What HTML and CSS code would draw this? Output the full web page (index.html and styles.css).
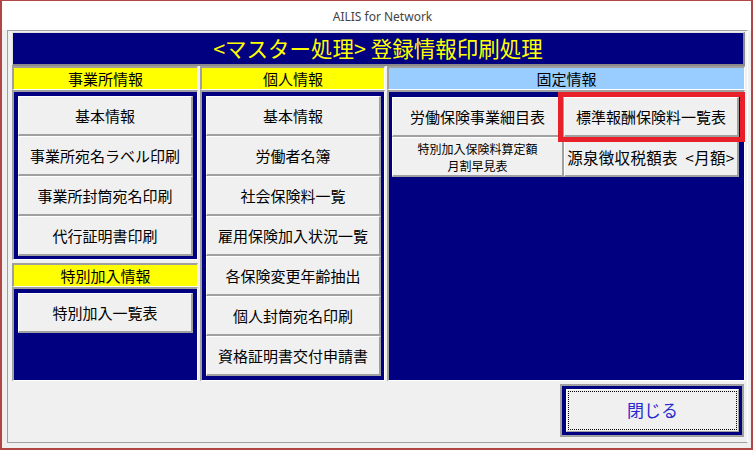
FILE: index.html
```html
<!DOCTYPE html>
<html lang="ja">
<head>
<meta charset="UTF-8">
<meta name="viewport" content="width=device-width, initial-scale=1.0">
<title>AILIS for Network</title>
<link rel="stylesheet" href="styles.css">
</head>
<body>

<div class="window">
  <div class="titlebar">AILIS for Network</div>
  <div class="client">
    <div class="panel">
      <div class="banner">&lt;マスター処理&gt; 登録情報印刷処理</div>

      <div class="columns">
        <div class="col">
          <div class="sec-head yellow">事業所情報</div>
          <div class="navy">
            <button class="btn">基本情報</button>
            <button class="btn">事業所宛名ラベル印刷</button>
            <button class="btn">事業所封筒宛名印刷</button>
            <button class="btn">代行証明書印刷</button>
          </div>
          <div class="sec-head yellow gap-top">特別加入情報</div>
          <div class="navy grow">
            <button class="btn">特別加入一覧表</button>
          </div>
        </div>

        <div class="col">
          <div class="sec-head yellow">個人情報</div>
          <div class="navy grow">
            <button class="btn">基本情報</button>
            <button class="btn">労働者名簿</button>
            <button class="btn">社会保険料一覧</button>
            <button class="btn">雇用保険加入状況一覧</button>
            <button class="btn">各保険変更年齢抽出</button>
            <button class="btn">個人封筒宛名印刷</button>
            <button class="btn">資格証明書交付申請書</button>
          </div>
        </div>

        <div class="col">
          <div class="sec-head blue">固定情報</div>
          <div class="navy grow fixed">
            <div class="fixed-grid">
              <button class="btn">労働保険事業細目表</button>
              <button class="btn">標準報酬保険料一覧表</button>
              <button class="btn small">特別加入保険料算定額<br>月割早見表</button>
              <button class="btn wide-text">源泉徴収税額表&nbsp; &lt;月額&gt;</button>
              <div class="highlight"></div>
            </div>
          </div>
        </div>
      </div>

      <div class="footer">
        <div class="close-frame">
          <button class="close-btn"><span class="focus">閉じる</span></button>
        </div>
      </div>
    </div>
  </div>
</div>

</body>
</html>
```

FILE: styles.css
```css
* {
  box-sizing: border-box;
}
body {
  margin: 0;
  width: 755px;
  height: 450px;
  background-color: #fff;
  font-family: "Noto Sans CJK JP", "Noto Sans", sans-serif;
  overflow: hidden;
}
.window {
  width: 753px;
  height: 450px;
  border: 2px solid #b04646;
  border-top-width: 1px;
  display: flex;
  flex-direction: column;
  background-color: #f0f0f0;
}
.titlebar {
  height: 29px;
  background-color: #fff;
  color: #444;
  font-family: "Noto Sans", sans-serif;
  font-size: 12px;
  line-height: 31px;
  text-align: center;
  padding-left: 12px;
}
.client {
  flex: 1;
  padding: 0 3px 5px 5px;
}
.panel {
  height: 100%;
  border: 1px solid #a0a0a0;
  border-right-color: #fff;
  border-bottom-color: #a0a0a0;
  padding: 1px 2px 0 4px;
  display: flex;
  flex-direction: column;
}
.banner {
  height: 34px;
  background-color: #000080;
  border-top: 1px solid #e0e0e0;
  border-left: 1px solid #e0e0e0;
  border-right: 2px solid #8a8a8a;
  border-bottom: 2px solid #8a8a8a;
  color: #ffff00;
  font-size: 21.5px;
  line-height: 30px;
  text-align: center;
}
.columns {
  display: grid;
  grid-template-columns: 186px 185px 1fr;
  gap: 2px;
  height: 315px;
}
.col {
  display: flex;
  flex-direction: column;
}
.sec-head {
  height: 24px;
  border-top: 2px solid #a0a0a0;
  border-left: 2px solid #a0a0a0;
  border-right: 1px solid #fff;
  border-bottom: 1px solid #fff;
  font-size: 15px;
  line-height: 21px;
  text-align: center;
  color: #000;
}
.yellow {
  background-color: #ffff00;
}
.blue {
  background-color: #99ccff;
}
.gap-top {
  margin-top: 3px;
}
.navy {
  background-color: #000080;
  border-top: 2px solid #a0a0a0;
  border-left: 2px solid #a0a0a0;
  border-right: 1px solid #fff;
  border-bottom: 1px solid #fff;
  padding: 4px 3px 3px 4px;
  display: flex;
  flex-direction: column;
}
.grow {
  flex: 1;
}
.btn {
  width: 175px;
  height: 40px;
  margin: 0;
  padding: 0;
  background-color: #f0f0f0;
  border-top: 1px solid #fff;
  border-left: 1px solid #fff;
  border-right: 2px solid #a0a0a0;
  border-bottom: 2px solid #a0a0a0;
  font-family: "Noto Sans CJK JP", sans-serif;
  font-size: 15px;
  color: #000;
  text-align: center;
}
.btn.small {
  font-size: 12px;
  line-height: 17px;
}
.btn.wide-text {
  font-size: 15.5px;
  letter-spacing: 0.3px;
  white-space: nowrap;
}
.fixed {
  padding: 5px 4px 3px 3px;
}
.fixed-grid {
  position: relative;
  display: grid;
  grid-template-columns: 172px 175px;
}
.fixed-grid .btn {
  width: auto;
}
.highlight {
  position: absolute;
  left: 166px;
  top: -5px;
  width: 187px;
  height: 50px;
  border: 5px solid #e8202a;
  pointer-events: none;
}
.footer {
  display: flex;
  justify-content: flex-end;
  padding: 3px 1px 0 0;
}
.close-frame {
  width: 184px;
  height: 53px;
  background-color: #000080;
  border: 2px solid #a0a0a0;
  padding: 3px 3px 3px 4px;
}
.close-btn {
  width: 100%;
  height: 100%;
  margin: 0;
  padding: 1px;
  background-color: #f0f0f0;
  border-top: 1px solid #fff;
  border-left: 1px solid #fff;
  border-right: 1px solid #a0a0a0;
  border-bottom: 1px solid #a0a0a0;
  font-family: "Noto Sans CJK JP", sans-serif;
  font-size: 17px;
  color: #2a2ad0;
}
.focus {
  display: block;
  height: 100%;
  border: 1px dotted #000;
  line-height: 36px;
}
```
